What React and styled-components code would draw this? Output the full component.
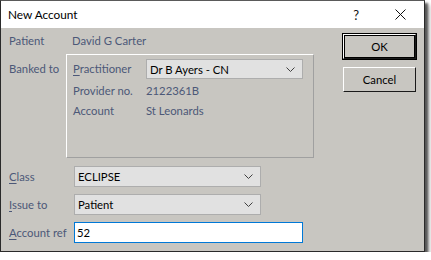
import styled, { createGlobalStyle } from 'styled-components';

const GlobalStyle = createGlobalStyle`
  body {
    margin: 0;
    background: #ffffff;
    font-family: Lato, "Noto Sans", "Liberation Sans", sans-serif;
  }
`;

function Combo({ value, width }) {
  return (
    <ComboUI $width={width}>
      <span>{value}</span>
      <svg width="9" height="5" viewBox="0 0 9 5">
        <path d="M0.5 0.5 L4.5 4.5 L8.5 0.5" fill="none" stroke="#404040" strokeWidth="1" />
      </svg>
    </ComboUI>
  );
}

export default function App() {
  return (
    <>
      <GlobalStyle />
      <WindowUI>
        <TitleBarUI>
          <TitleUI>New Account</TitleUI>
          <CaptionButtonsUI>
            <HelpUI>?</HelpUI>
            <svg width="11" height="11" viewBox="0 0 11 11">
              <path d="M0.5 0.5 L10.5 10.5 M10.5 0.5 L0.5 10.5" stroke="#111" strokeWidth="1" />
            </svg>
          </CaptionButtonsUI>
        </TitleBarUI>

        <BodyUI>
          <FormUI>
            <RowUI $height={16}>
              <LabelUI>Patient</LabelUI>
              <ValueUI>David G Carter</ValueUI>
            </RowUI>

            <RowUI $gap={5} $top>
              <LabelUI $top={7}>Banked to</LabelUI>
              <GroupUI>
                <InnerRowUI>
                  <LabelUI>
                    <u>P</u>ractitioner
                  </LabelUI>
                  <Combo value="Dr B Ayers - CN" width={157} />
                </InnerRowUI>
                <InnerRowUI $gap={2}>
                  <LabelUI>Provider no.</LabelUI>
                  <LabelUI>2122361B</LabelUI>
                </InnerRowUI>
                <InnerRowUI>
                  <LabelUI>Account</LabelUI>
                  <LabelUI>St Leonards</LabelUI>
                </InnerRowUI>
              </GroupUI>
            </RowUI>

            <RowUI $gap={8} $height={21}>
              <LabelUI>
                <u>C</u>lass
              </LabelUI>
              <FieldUI>
                <Combo value="ECLIPSE" width={187} />
              </FieldUI>
            </RowUI>

            <RowUI $gap={7} $height={21}>
              <LabelUI>
                <u>I</u>ssue to
              </LabelUI>
              <FieldUI>
                <Combo value="Patient" width={187} />
              </FieldUI>
            </RowUI>

            <RowUI $gap={7} $height={21}>
              <LabelUI>
                <u>A</u>ccount ref
              </LabelUI>
              <FieldUI>
                <InputUI>52</InputUI>
              </FieldUI>
            </RowUI>
          </FormUI>

          <ButtonsUI>
            <ButtonUI $default>OK</ButtonUI>
            <ButtonUI>Cancel</ButtonUI>
          </ButtonsUI>
        </BodyUI>
      </WindowUI>
    </>
  );
}

const WindowUI = styled.div`
  width: 425px;
  height: 252px;
  box-sizing: border-box;
  border: 1px solid #2a2a2a;
  border-top-color: #5a5a5a;
  background: #c8c6c1;
  box-shadow: 3px 3px 2px rgba(0, 0, 0, 0.55), 5px 5px 4px rgba(0, 0, 0, 0.25);
  display: flex;
  flex-direction: column;
  font-size: 11.3px;
`;

const TitleBarUI = styled.div`
  height: 27px;
  background: #ffffff;
  display: flex;
  align-items: center;
  justify-content: space-between;
  padding: 0 18px 0 7px;
`;

const TitleUI = styled.div`
  font-size: 11.8px;
  color: #000;
`;

const CaptionButtonsUI = styled.div`
  display: flex;
  align-items: center;
  gap: 36px;
`;

const HelpUI = styled.span`
  font-size: 13px;
  color: #111;
`;

const BodyUI = styled.div`
  flex: 1;
  display: flex;
  justify-content: space-between;
  padding: 5px 8px 0 8px;
`;

const FormUI = styled.div`
  display: flex;
  flex-direction: column;
`;

const RowUI = styled.div`
  display: grid;
  grid-template-columns: 57px 248px;
  align-items: ${p => (p.$top ? 'start' : 'center')};
  height: ${p => (p.$height ? `${p.$height}px` : 'auto')};
  margin-top: ${p => p.$gap || 0}px;
`;

const LabelUI = styled.div`
  color: #4c5878;
  line-height: 16px;
  white-space: nowrap;
  padding-top: ${p => p.$top || 0}px;

  u {
    text-decoration-thickness: 1px;
    text-underline-offset: 2px;
  }
`;

const ValueUI = styled.div`
  color: #4c5878;
  line-height: 16px;
  padding-left: 6px;
`;

const GroupUI = styled.div`
  box-sizing: border-box;
  height: 104px;
  border-top: 1px solid #ffffff;
  border-left: 1px solid #ffffff;
  border-right: 1px solid #a0a0a0;
  border-bottom: 1px solid #a0a0a0;
  padding: 4px 0 0 6px;
  display: flex;
  flex-direction: column;
`;

const InnerRowUI = styled.div`
  display: grid;
  grid-template-columns: 73px auto;
  align-items: center;
  height: 20px;
  margin-top: ${p => p.$gap || 0}px;
`;

const FieldUI = styled.div`
  padding-left: 8px;
  display: flex;
  height: 100%;
`;

const ComboUI = styled.div`
  box-sizing: border-box;
  width: ${p => p.$width}px;
  height: 100%;
  border: 1px solid #adadad;
  background: #e1e1e1;
  color: #000;
  display: flex;
  align-items: center;
  justify-content: space-between;
  padding: 0 7px 0 3px;
`;

const InputUI = styled.div`
  box-sizing: border-box;
  width: 229px;
  height: 100%;
  border: 1px solid #0078d7;
  background: #ffffff;
  color: #000;
  display: flex;
  align-items: center;
  padding-left: 2px;
`;

const ButtonsUI = styled.div`
  display: flex;
  flex-direction: column;
  gap: 8px;
  padding-top: 1px;
`;

const ButtonUI = styled.div`
  box-sizing: border-box;
  width: 73px;
  height: 25px;
  display: flex;
  align-items: center;
  justify-content: center;
  color: #000;
  background: #c8c6c1;
  border-top: 1px solid #ffffff;
  border-left: 1px solid #ffffff;
  border-right: 1px solid #1a1a1a;
  border-bottom: 1px solid #1a1a1a;
  box-shadow: ${p => (p.$default ? '0 0 0 1px #000 inset, 1px 1px 0 0 #000' : 'none')};
  outline: ${p => (p.$default ? '1px solid #000' : 'none')};
`;
